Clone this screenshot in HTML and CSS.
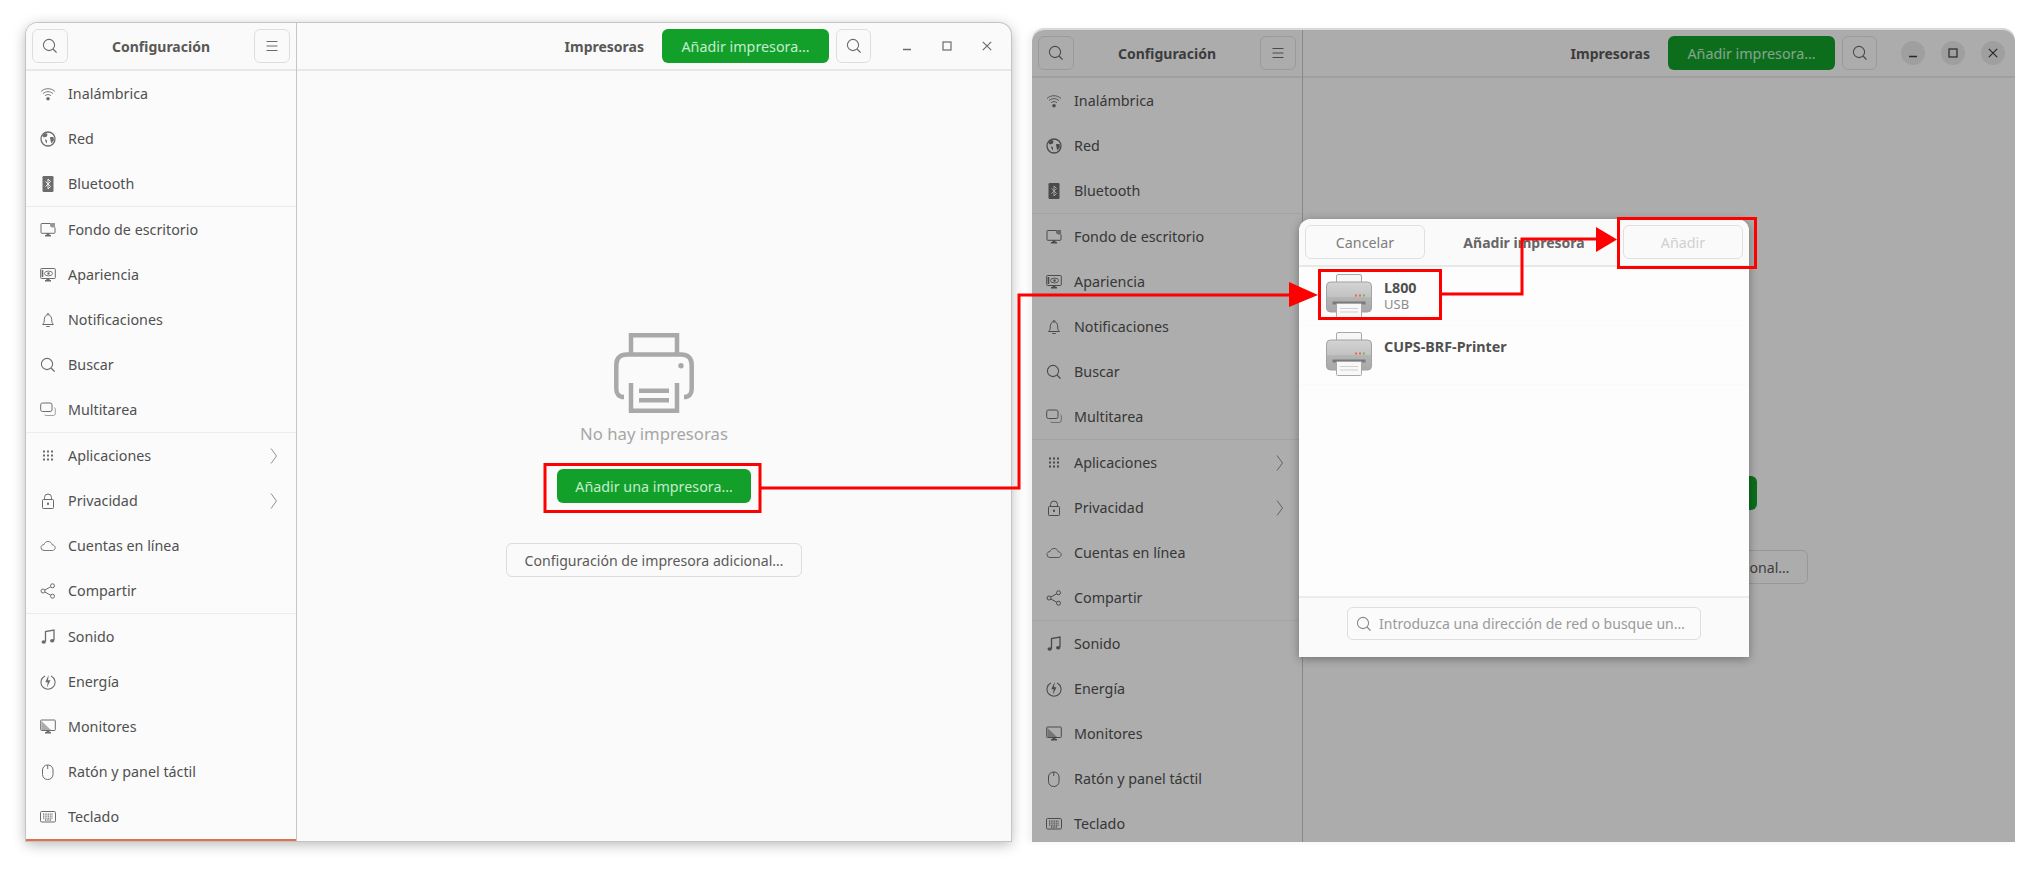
FILE: index.html
```html
<!DOCTYPE html>
<html lang="es">
<head>
  <meta charset="utf-8">
  <title>Añadir impresora</title>
  <link rel="stylesheet" href="styles.css">
</head>
<body>
  <svg class="icon-defs" width="0" height="0">
    <symbol id="i-search" viewBox="0 0 16 16"><circle cx="7" cy="7" r="5.6" fill="none" stroke="currentColor" stroke-width="1.1"/><path d="M11 11l3.6 3.6" stroke="currentColor" stroke-width="1.3" fill="none"/></symbol>
    <symbol id="i-menu" viewBox="0 0 16 16"><path d="M2.500 3.500h11M2.500 8h11M2.500 12.500h11" stroke="currentColor" stroke-width="1.2" fill="none"/></symbol>
    <symbol id="i-min" viewBox="0 0 16 16"><path d="M4 11.500h8" stroke="currentColor" stroke-width="1.3" fill="none"/></symbol>
    <symbol id="i-max" viewBox="0 0 16 16"><rect x="4" y="4" width="8" height="8" fill="none" stroke="currentColor" stroke-width="1.2"/></symbol>
    <symbol id="i-close" viewBox="0 0 16 16"><path d="M3.800 3.800l8.400 8.400M12.200 3.800l-8.400 8.400" stroke="currentColor" stroke-width="1.2" fill="none"/></symbol>
    <symbol id="i-chevron" viewBox="0 0 16 16"><path d="M5 .5L10.500 8 5 15.500" stroke="currentColor" stroke-width="1" fill="none"/></symbol>
    <symbol id="i-wifi" viewBox="0 0 16 16"><g fill="none" stroke="currentColor" stroke-width=".9"><path d="M1 5.500C5 1.800 11 1.800 15 5.500"/><path d="M3 7.600C6 5 10 5 13 7.600"/><path d="M5 9.700C7 8.200 9 8.200 11 9.700"/></g><circle cx="8" cy="12.700" r="1.800" fill="currentColor"/></symbol>
    <symbol id="i-globe" viewBox="0 0 16 16"><circle cx="8" cy="8" r="7" fill="none" stroke="currentColor" stroke-width="1.300"/><path d="M4.500 2L7.500 2.800 7 5.500 3.800 6.500 2.500 5zM10 6L13.500 6 14 9 11.500 12.500 10.500 9.500zM5 8L7 9.500 7 12.500 5.500 10.500z" fill="currentColor"/></symbol>
    <symbol id="i-bluetooth" viewBox="0 0 16 16"><rect x="2.500" y="0" width="11" height="16" rx="1.200" fill="currentColor"/><path d="M5.500 5.300L10.500 10.500 8 13V3l2.500 2.500L5.500 10.700" fill="none" stroke="#fbfbfb" stroke-width=".9"/></symbol>
    <symbol id="i-wallpaper" viewBox="0 0 16 16"><path d="M15 5.500V10.500a.8.8 0 0 1-.8.8H1.800a.8.8 0 0 1-.8-.8V2.300a.8.8 0 0 1 .8-.8H10" fill="none" stroke="currentColor" stroke-width="1"/><path d="M10 1h5v4.500h-2.500A2.500 2.500 0 0 1 10 3z" fill="currentColor" opacity=".7"/><path d="M5 14.500h6V13H9.500v-1.700h-3V13H5z" fill="currentColor"/></symbol>
    <symbol id="i-appearance" viewBox="0 0 16 16"><rect x=".700" y="1.500" width="14.600" height="10" rx=".8" fill="none" stroke="currentColor" stroke-width="1"/><path d="M2.500 3v7" stroke="currentColor" stroke-width="1.600"/><ellipse cx="8.500" cy="6.500" rx="4" ry="2.400" fill="none" stroke="currentColor" stroke-width=".9"/><circle cx="8.500" cy="6.500" r="1.200" fill="currentColor"/><path d="M5 14.500h6V13H9.500v-1.500h-3V13H5z" fill="currentColor"/></symbol>
    <symbol id="i-bell" viewBox="0 0 16 16"><path d="M2.500 12.500c1.500-1.300 1.800-2.500 1.800-5C4.300 4.700 5.800 2.800 8 2.800s3.700 1.900 3.700 4.700c0 2.500.3 3.700 1.800 5z" fill="none" stroke="currentColor" stroke-width="1"/><path d="M7 2.500a1 1 0 0 1 2 0M6.300 14.500h3.400" stroke="currentColor" stroke-width="1" fill="none"/></symbol>
    <symbol id="i-multitask" viewBox="0 0 16 16"><rect x=".7" y="1" width="11.300" height="8.500" rx="1.800" fill="none" stroke="currentColor" stroke-width="1"/><path d="M14.500 5.500c.5.400.8.900.8 1.500v4.500a2 2 0 0 1-2 2H6c-.6 0-1.200-.3-1.600-.8" fill="none" stroke="currentColor" stroke-width=".9" opacity=".7"/></symbol>
    <symbol id="i-grid" viewBox="0 0 16 16"><g fill="currentColor"><rect x="3" y="2.500" width="2" height="2"/><rect x="7" y="2.500" width="2" height="2"/><rect x="11" y="2.500" width="2" height="2"/><rect x="3" y="6.500" width="2" height="2"/><rect x="7" y="6.500" width="2" height="2"/><rect x="11" y="6.500" width="2" height="2"/><rect x="3" y="10.500" width="2" height="2"/><rect x="7" y="10.500" width="2" height="2"/><rect x="11" y="10.500" width="2" height="2"/></g></symbol>
    <symbol id="i-lock" viewBox="0 0 16 16"><rect x="2.500" y="6.500" width="11" height="9" rx=".8" fill="none" stroke="currentColor" stroke-width="1"/><path d="M4.500 6.500V4.500a3.500 3.500 0 0 1 7 0v2" fill="none" stroke="currentColor" stroke-width="1"/><rect x="7" y="9.500" width="2" height="2.500" rx=".8" fill="currentColor"/></symbol>
    <symbol id="i-cloud" viewBox="0 0 16 16"><path d="M4 12.500a3 3 0 0 1-3-3c0-1.600 1.300-2.900 3-3 .7-2 2.300-3 4-3 2.300 0 3.800 1.500 4.200 3.300 1.700.1 3 1.300 3 2.900 0 1.600-1.300 2.800-3 2.800z" fill="none" stroke="currentColor" stroke-width=".9"/></symbol>
    <symbol id="i-share" viewBox="0 0 16 16"><g fill="none" stroke="currentColor" stroke-width="1"><circle cx="12.500" cy="2.800" r="2"/><circle cx="12.500" cy="13.200" r="2"/><circle cx="3" cy="8" r="2"/><path d="M4.800 7L10.700 3.800M4.800 9L10.700 12.200"/></g></symbol>
    <symbol id="i-music" viewBox="0 0 16 16"><path d="M5.500 12.500V2.500L14 1v10" fill="none" stroke="currentColor" stroke-width="1.300"/><ellipse cx="3.700" cy="13" rx="2.200" ry="1.800" fill="currentColor"/><ellipse cx="12.200" cy="11.800" rx="2.200" ry="1.800" fill="currentColor"/></symbol>
    <symbol id="i-power" viewBox="0 0 16 16"><path d="M5 2a7 7 0 1 0 6 0" fill="none" stroke="currentColor" stroke-width="1.100"/><path d="M8.700 .7L5.300 8.300h2.400L6.900 13.500l3.600-7.200H8z" fill="currentColor"/></symbol>
    <symbol id="i-display" viewBox="0 0 16 16"><rect x=".7" y="1" width="14.600" height="10.500" rx=".8" fill="none" stroke="currentColor" stroke-width="1"/><path d="M1.500 2L11 11H1.500z" fill="currentColor" opacity=".55"/><path d="M5 14.500h6V13H9.500v-1.500h-3V13H5z" fill="currentColor"/></symbol>
    <symbol id="i-mouse" viewBox="0 0 16 16"><rect x="2.500" y="1" width="10.500" height="14.500" rx="5" fill="none" stroke="currentColor" stroke-width="1"/><path d="M7.700 1v4" stroke="currentColor" stroke-width="1"/></symbol>
    <symbol id="i-keyboard" viewBox="0 0 16 16"><rect x=".5" y="2.500" width="15" height="10.500" rx="1.200" fill="none" stroke="currentColor" stroke-width="1"/><path d="M3 5.200h10M3 7.200h10M3 9.200h10M5 11h6" stroke="currentColor" stroke-width="1.300" stroke-dasharray="1 .7" fill="none"/></symbol>
    <symbol id="i-printer" viewBox="0 0 80 80"><g fill="none" stroke="currentColor" stroke-width="4.500"><path d="M17 20V2.300h46V20"/><path d="M10 64c-5 0-7.700-3-7.700-8V32c0-7 4-10.500 10.500-10.500h54.400c6.500 0 10.500 3.500 10.500 10.500v24c0 5-2.700 8-7.700 8"/><path d="M17 50v27.700h46V50"/></g><circle cx="67" cy="32.700" r="2.700" fill="currentColor"/><rect x="25" y="55.500" width="30" height="4.500" fill="currentColor"/><rect x="25" y="65" width="30" height="4.500" fill="currentColor"/></symbol>
    <linearGradient id="printer-body" x1="0" y1="0" x2="0" y2="1"><stop offset="0" stop-color="#d4d4d4"/><stop offset=".5" stop-color="#c2c2c2"/><stop offset=".52" stop-color="#b4b4b4"/><stop offset="1" stop-color="#a8a8a8"/></linearGradient>
    <symbol id="i-printer-color" viewBox="0 0 46 44"><rect x="10.500" y=".5" width="25" height="14" rx="1.500" fill="#f6f6f6" stroke="#a8a8a8"/><rect x=".5" y="8" width="45" height="30" rx="4" fill="url(#printer-body)" stroke="#a2a2a2"/><rect x="6.500" y="27.500" width="33" height="3" fill="#7a7a7a"/><rect x="10.500" y="29.500" width="25" height="14" rx="1" fill="#f8f8f8" stroke="#a8a8a8"/><path d="M14 34.500h18M14 38h18" stroke="#cfcfcf" stroke-width="1"/><rect x="29" y="20.500" width="2" height="2" fill="#f2625a"/><rect x="33" y="20.500" width="2" height="2" fill="#f2625a"/><rect x="37" y="20.500" width="2" height="2" fill="#6cc04a"/></symbol>
  </svg>

  <div class="window window-left">
    <aside class="sidebar">
      <header class="sidebar-header">
        <button class="tool-btn"><svg class="ico"><use href="#i-search"/></svg></button>
        <span class="header-title">Configuración</span>
        <button class="tool-btn"><svg class="ico"><use href="#i-menu"/></svg></button>
      </header>
      <nav class="nav">
        <div class="nav-item"><svg class="ico"><use href="#i-wifi"/></svg><span>Inalámbrica</span></div>
        <div class="nav-item"><svg class="ico"><use href="#i-globe"/></svg><span>Red</span></div>
        <div class="nav-item"><svg class="ico"><use href="#i-bluetooth"/></svg><span>Bluetooth</span></div>
        <div class="nav-sep"></div>
        <div class="nav-item"><svg class="ico"><use href="#i-wallpaper"/></svg><span>Fondo de escritorio</span></div>
        <div class="nav-item"><svg class="ico"><use href="#i-appearance"/></svg><span>Apariencia</span></div>
        <div class="nav-item"><svg class="ico"><use href="#i-bell"/></svg><span>Notificaciones</span></div>
        <div class="nav-item"><svg class="ico"><use href="#i-search"/></svg><span>Buscar</span></div>
        <div class="nav-item"><svg class="ico"><use href="#i-multitask"/></svg><span>Multitarea</span></div>
        <div class="nav-sep"></div>
        <div class="nav-item"><svg class="ico"><use href="#i-grid"/></svg><span>Aplicaciones</span><svg class="chevron"><use href="#i-chevron"/></svg></div>
        <div class="nav-item"><svg class="ico"><use href="#i-lock"/></svg><span>Privacidad</span><svg class="chevron"><use href="#i-chevron"/></svg></div>
        <div class="nav-item"><svg class="ico"><use href="#i-cloud"/></svg><span>Cuentas en línea</span></div>
        <div class="nav-item"><svg class="ico"><use href="#i-share"/></svg><span>Compartir</span></div>
        <div class="nav-sep"></div>
        <div class="nav-item"><svg class="ico"><use href="#i-music"/></svg><span>Sonido</span></div>
        <div class="nav-item"><svg class="ico"><use href="#i-power"/></svg><span>Energía</span></div>
        <div class="nav-item"><svg class="ico"><use href="#i-display"/></svg><span>Monitores</span></div>
        <div class="nav-item"><svg class="ico"><use href="#i-mouse"/></svg><span>Ratón y panel táctil</span></div>
        <div class="nav-item"><svg class="ico"><use href="#i-keyboard"/></svg><span>Teclado</span></div>
      </nav>
      <div class="nav-active-line"></div>
    </aside>
    <main class="content">
      <header class="content-header">
        <span class="header-title">Impresoras</span>
        <button class="btn-green btn-add-top">Añadir impresora…</button>
        <button class="tool-btn"><svg class="ico"><use href="#i-search"/></svg></button>
        <div class="win-controls">
          <span class="win-btn"><svg class="ico"><use href="#i-min"/></svg></span>
          <span class="win-btn"><svg class="ico"><use href="#i-max"/></svg></span>
          <span class="win-btn"><svg class="ico"><use href="#i-close"/></svg></span>
        </div>
      </header>
      <section class="empty">
        <svg class="empty-icon"><use href="#i-printer"/></svg>
        <p class="empty-text">No hay impresoras</p>
        <button class="btn-green btn-add-main">Añadir una impresora…</button>
        <button class="btn-plain">Configuración de impresora adicional…</button>
      </section>
    </main>
  </div>

  <div class="window window-right">
    <aside class="sidebar">
      <header class="sidebar-header">
        <button class="tool-btn"><svg class="ico"><use href="#i-search"/></svg></button>
        <span class="header-title">Configuración</span>
        <button class="tool-btn"><svg class="ico"><use href="#i-menu"/></svg></button>
      </header>
      <nav class="nav">
        <div class="nav-item"><svg class="ico"><use href="#i-wifi"/></svg><span>Inalámbrica</span></div>
        <div class="nav-item"><svg class="ico"><use href="#i-globe"/></svg><span>Red</span></div>
        <div class="nav-item"><svg class="ico"><use href="#i-bluetooth"/></svg><span>Bluetooth</span></div>
        <div class="nav-sep"></div>
        <div class="nav-item"><svg class="ico"><use href="#i-wallpaper"/></svg><span>Fondo de escritorio</span></div>
        <div class="nav-item"><svg class="ico"><use href="#i-appearance"/></svg><span>Apariencia</span></div>
        <div class="nav-item"><svg class="ico"><use href="#i-bell"/></svg><span>Notificaciones</span></div>
        <div class="nav-item"><svg class="ico"><use href="#i-search"/></svg><span>Buscar</span></div>
        <div class="nav-item"><svg class="ico"><use href="#i-multitask"/></svg><span>Multitarea</span></div>
        <div class="nav-sep"></div>
        <div class="nav-item"><svg class="ico"><use href="#i-grid"/></svg><span>Aplicaciones</span><svg class="chevron"><use href="#i-chevron"/></svg></div>
        <div class="nav-item"><svg class="ico"><use href="#i-lock"/></svg><span>Privacidad</span><svg class="chevron"><use href="#i-chevron"/></svg></div>
        <div class="nav-item"><svg class="ico"><use href="#i-cloud"/></svg><span>Cuentas en línea</span></div>
        <div class="nav-item"><svg class="ico"><use href="#i-share"/></svg><span>Compartir</span></div>
        <div class="nav-sep"></div>
        <div class="nav-item"><svg class="ico"><use href="#i-music"/></svg><span>Sonido</span></div>
        <div class="nav-item"><svg class="ico"><use href="#i-power"/></svg><span>Energía</span></div>
        <div class="nav-item"><svg class="ico"><use href="#i-display"/></svg><span>Monitores</span></div>
        <div class="nav-item"><svg class="ico"><use href="#i-mouse"/></svg><span>Ratón y panel táctil</span></div>
        <div class="nav-item"><svg class="ico"><use href="#i-keyboard"/></svg><span>Teclado</span></div>
      </nav>
    </aside>
    <main class="content">
      <header class="content-header">
        <span class="header-title">Impresoras</span>
        <button class="btn-green btn-add-top">Añadir impresora…</button>
        <button class="tool-btn"><svg class="ico"><use href="#i-search"/></svg></button>
        <div class="win-controls">
          <span class="win-btn win-btn-round"><svg class="ico"><use href="#i-min"/></svg></span>
          <span class="win-btn win-btn-round"><svg class="ico"><use href="#i-max"/></svg></span>
          <span class="win-btn win-btn-round"><svg class="ico"><use href="#i-close"/></svg></span>
        </div>
      </header>
      <section class="empty">
        <svg class="empty-icon"><use href="#i-printer"/></svg>
        <p class="empty-text">No hay impresoras</p>
        <button class="btn-green btn-add-main">Añadir una impresora…</button>
        <button class="btn-plain">Configuración de impresora adicional…</button>
      </section>
    </main>
    <div class="dim"></div>
  </div>

  <div class="dialog">
    <header class="dialog-header">
      <button class="dialog-btn">Cancelar</button>
      <span class="header-title dialog-title">Añadir impresora</span>
      <button class="dialog-btn dialog-btn-off">Añadir</button>
    </header>
    <div class="device-list">
      <div class="device">
        <svg class="device-icon"><use href="#i-printer-color"/></svg>
        <div class="device-info"><b>L800</b><span>USB</span></div>
      </div>
      <div class="device device-top">
        <svg class="device-icon"><use href="#i-printer-color"/></svg>
        <div class="device-info"><b>CUPS-BRF-Printer</b></div>
      </div>
    </div>
    <footer class="dialog-footer">
      <div class="search-entry">
        <svg class="ico"><use href="#i-search"/></svg>
        <span>Introduzca una dirección de red o busque un…</span>
      </div>
    </footer>
  </div>

  <svg class="callouts" viewBox="0 0 2039 869">
    <g fill="none" stroke="#f00" stroke-width="3">
      <rect x="545" y="464.500" width="215" height="47"/>
      <path d="M761 488H1019V295H1290"/>
      <rect x="1319.500" y="270.500" width="121" height="48"/>
      <path d="M1442 294H1522V239H1597"/>
      <rect x="1618.500" y="218.500" width="137" height="49"/>
    </g>
    <path d="M1289 282L1318 295 1289 307z" fill="#f00"/>
    <path d="M1596 227L1617 239.500 1596 252z" fill="#f00"/>
  </svg>
</body>
</html>
```

FILE: styles.css
```css
* {
  box-sizing: border-box;
}
html, body {
  margin: 0;
  padding: 0;
}
body {
  position: relative;
  width: 2039px;
  height: 869px;
  overflow: hidden;
  background: #fff;
  font-family: "Noto Sans", sans-serif;
  font-size: 14.3px;
  color: #505050;
}
button {
  font: inherit;
  padding: 0;
  cursor: pointer;
}
.icon-defs {
  position: absolute;
}

/* windows */
.window {
  position: absolute;
  display: flex;
  overflow: hidden;
  background: #fafafa;
  border-radius: 12px 12px 0 0;
}
.window-left {
  left: 26px;
  top: 23px;
  width: 985px;
  height: 818px;
  box-shadow: 0 0 0 1px #c4c4c4, 0 3px 14px rgba(0, 0, 0, 0.3);
}
.window-right {
  left: 1032px;
  top: 30px;
  width: 983px;
  height: 812px;
  box-shadow: 0 -2px 0 #d8d8d8, -4px 0 6px rgba(0, 0, 0, 0.06);
}
.window-right .content-header {
  padding-right: 2px;
}
.window-right .empty {
  padding-left: 2px;
}
.dim {
  position: absolute;
  inset: 0;
  background: rgba(0, 0, 0, 0.31);
}

/* sidebar */
.sidebar {
  width: 271px;
  flex-shrink: 0;
  background: #fbfbfb;
  border-right: 1px solid #c6c6c6;
  display: flex;
  flex-direction: column;
}
.sidebar-header {
  height: 48px;
  flex-shrink: 0;
  display: flex;
  align-items: center;
  justify-content: space-between;
  padding: 0 6px;
  background: #fafafa;
  border-bottom: 2px solid #e8e8e8;
}
.header-title {
  font-weight: 700;
  font-size: 14px;
  color: #585858;
}
.tool-btn {
  width: 36px;
  height: 34px;
  display: flex;
  align-items: center;
  justify-content: center;
  background: #fafafa;
  border: 1px solid #dedede;
  border-radius: 6px;
  color: #6a6a6a;
}
.nav {
  flex-shrink: 0;
}
.nav-item {
  height: 45px;
  display: flex;
  align-items: center;
  padding-left: 14px;
  color: #505050;
}
.nav-item .ico {
  margin-right: 12px;
}
.nav-item span {
  flex: 1;
  margin-top: -1px;
}
.nav-sep {
  height: 1px;
  background: #ececec;
}
.nav-active-line {
  height: 2px;
  background: #e0714f;
}
.ico {
  width: 16px;
  height: 16px;
  flex-shrink: 0;
  color: #6c6c6c;
}
.chevron {
  width: 16px;
  height: 16px;
  margin-right: 14px;
  color: #8f8f8f;
}

/* main pane */
.content {
  flex: 1;
  min-width: 0;
  display: flex;
  flex-direction: column;
}
.content-header {
  height: 48px;
  flex-shrink: 0;
  display: flex;
  align-items: center;
  justify-content: flex-end;
  padding-right: 4px;
  border-bottom: 2px solid #e8e8e8;
}
.content-header .tool-btn {
  width: 35px;
}
.btn-green {
  height: 34px;
  background: #12a02a;
  border: none;
  border-radius: 6px;
  color: #c4ecce;
}
.btn-add-top {
  width: 167px;
  margin: 0 7px 0 18px;
}
.win-controls {
  display: flex;
  margin-left: 16px;
}
.win-btn {
  width: 40px;
  height: 40px;
  display: flex;
  align-items: center;
  justify-content: center;
}
.win-btn-round {
  position: relative;
}
.win-btn-round::before {
  content: "";
  position: absolute;
  inset: 8px;
  border-radius: 50%;
  background: #e6e6e6;
}
.win-btn-round .ico {
  position: relative;
  color: #3a3a3a;
}
.empty {
  display: flex;
  flex-direction: column;
  align-items: center;
  padding-top: 262px;
}
.empty-icon {
  width: 80px;
  height: 80px;
  color: #a9a9a9;
}
.empty-text {
  margin: 8px 0 0;
  font-size: 16.7px;
  line-height: 26px;
  color: #a6a6a6;
}
.btn-add-main {
  width: 194px;
  margin-top: 22px;
}
.btn-plain {
  width: 296px;
  height: 34px;
  margin-top: 40px;
  font-size: 14.1px;
  background: #fafafa;
  border: 1px solid #dcdcdc;
  border-radius: 6px;
  color: #5a5a5a;
}

/* add printer dialog */
.dialog {
  position: absolute;
  left: 1299px;
  top: 219px;
  width: 450px;
  height: 438px;
  display: flex;
  flex-direction: column;
  overflow: hidden;
  background: #fdfdfd;
  border-radius: 12px 12px 0 0;
  box-shadow: 0 2px 10px rgba(0, 0, 0, 0.35);
}
.dialog-header {
  height: 48px;
  flex-shrink: 0;
  display: flex;
  align-items: center;
  justify-content: space-between;
  padding: 0 6px;
  background: #fafafa;
  border-bottom: 2px solid #e8e8e8;
}
.dialog-title {
  color: #666;
}
.dialog-btn {
  width: 120px;
  height: 34px;
  background: #fafafa;
  border: 1px solid #e0e0e0;
  border-radius: 6px;
  color: #7e7e7e;
}
.dialog-btn-off {
  color: #d0d0d0;
}
.device-list {
  flex: 1;
}
.device {
  height: 59px;
  display: flex;
  align-items: center;
  padding-left: 27px;
  border-bottom: 1px solid #fafafa;
}
.device-top {
  align-items: flex-start;
  padding-top: 6px;
}
.device-icon {
  width: 46px;
  height: 44px;
  flex-shrink: 0;
  margin-right: 12px;
}
.device-info {
  display: flex;
  flex-direction: column;
  line-height: 16px;
}
.device-top .device-info {
  margin-top: 7px;
}
.device-info b {
  font-size: 14.3px;
  color: #505050;
}
.device-info span {
  font-size: 13px;
  color: #8c8c8c;
}
.dialog-footer {
  height: 61px;
  flex-shrink: 0;
  display: flex;
  justify-content: center;
  padding-top: 9px;
  background: #fafafa;
  border-top: 2px solid #ececec;
}
.search-entry {
  width: 354px;
  height: 33px;
  display: flex;
  align-items: center;
  gap: 7px;
  padding-left: 8px;
  font-size: 14px;
  background: #fbfbfb;
  border: 1px solid #dedede;
  border-radius: 6px;
  color: #9a9a9a;
}
.search-entry .ico {
  color: #8a8a8a;
}

/* red annotations */
.callouts {
  position: absolute;
  left: 0;
  top: 0;
  width: 2039px;
  height: 869px;
  pointer-events: none;
}
```
